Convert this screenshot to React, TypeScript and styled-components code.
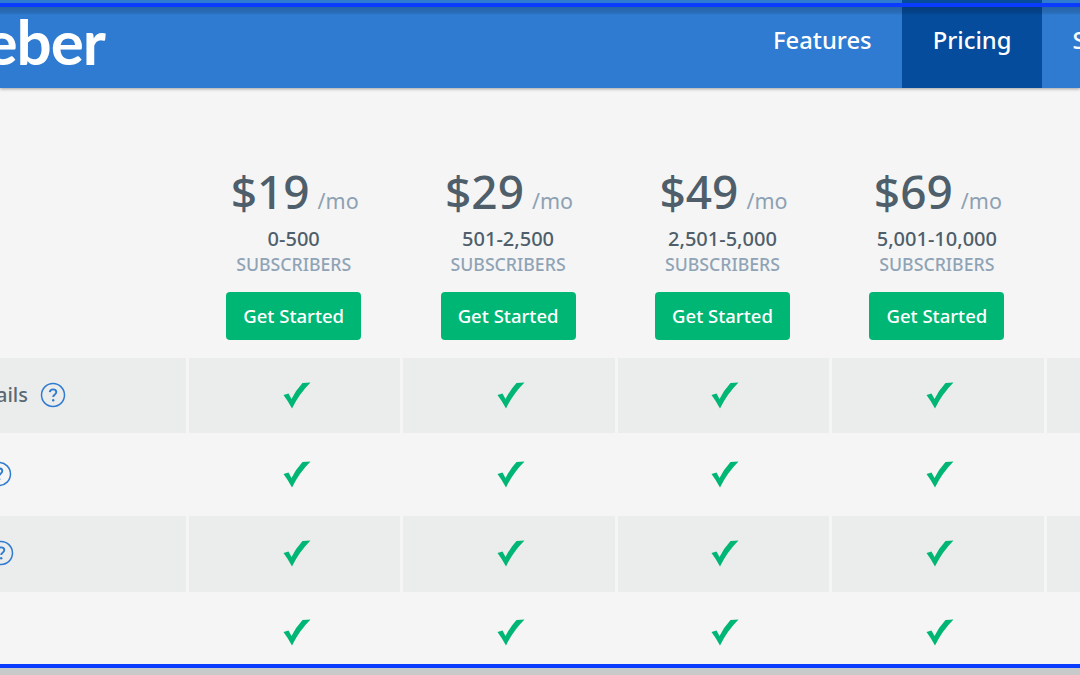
import React from "react";
import styled, { createGlobalStyle } from "styled-components";

const Global = createGlobalStyle`
  html, body { margin: 0; padding: 0; background: #f5f5f5; }
  body { font-family: "Noto Sans", "Open Sans", sans-serif; }
`;

const Page = styled.div`
  position: relative;
  width: 1080px;
  height: 675px;
  overflow: hidden;
  display: flex;
  flex-direction: column;
  background: #f5f5f5;
`;

const TopRule = styled.div`
  position: absolute;
  top: 3px;
  left: 0;
  right: 0;
  height: 4px;
  background: #0a3cff;
  &::after {
    content: "";
    position: absolute;
    top: 4px;
    left: 0;
    right: 0;
    height: 8px;
    background: linear-gradient(rgba(0, 0, 0, 0.2), rgba(0, 0, 0, 0.12) 70%, rgba(0, 0, 0, 0));
  }
`;

const Header = styled.header`
  flex: 0 0 88px;
  display: flex;
  background: #2f7bd1;
  box-shadow: 0 1px 3px rgba(0, 0, 0, 0.35);
  position: relative;
`;

const LogoArea = styled.div`
  flex: 0 0 743px;
  overflow: hidden;
  display: flex;
  justify-content: flex-end;
  width: 743px;
`;

const Logo = styled.div`
  margin-right: 638px;
  margin-top: 2px;
  font-family: "Lato", sans-serif;
  font-weight: 700;
  font-size: 62px;
  line-height: 78px;
  letter-spacing: -1px;
  color: #fff;
  white-space: nowrap;
`;

const Nav = styled.nav`
  display: flex;
  flex-shrink: 0;
`;

const NavItem = styled.a<{ $active?: boolean }>`
  flex-shrink: 0;
  padding: 0 ${(p) => (p.$active ? "31px" : "30px")} 9px;
  display: flex;
  align-items: center;
  height: 88px;
  box-sizing: border-box;
  font-family: "Noto Sans", sans-serif;
  font-size: 23.8px;
  font-weight: 500;
  color: #fff;
  background: ${(p) => (p.$active ? "#054c9c" : "transparent")};
`;

const Content = styled.main`
  flex: 1;
  min-height: 0;
  overflow: hidden;
`;

const Table = styled.div`
  display: grid;
  grid-template-columns: 186px repeat(5, 211.4px);
  grid-template-rows: 266px repeat(4, 75.2px);
  column-gap: 3px;
  row-gap: 4px;
  width: 1300px;
`;

const PlanHead = styled.div`
  box-sizing: border-box;
  padding-top: 73px;
  padding-right: 2px;
  display: flex;
  flex-direction: column;
  align-items: center;
`;

const Spacer = styled.div``;

const Price = styled.div`
  display: flex;
  align-items: baseline;
  gap: 8px;
  height: 60px;
  margin-left: 2px;
  color: #4e5e6a;
  font-size: 46px;
  font-weight: 500;
  line-height: 60px;
`;

const Per = styled.span`
  font-size: 21.5px;
  font-weight: 400;
  color: #8da1b3;
`;

const Range = styled.div`
  margin-top: 5px;
  font-size: 20px;
  font-weight: 500;
  line-height: 26px;
  color: #4e5e6a;
`;

const Unit = styled.div`
  font-size: 17.7px;
  font-weight: 500;
  line-height: 26px;
  margin-top: -1px;
  color: #8fa3b5;
  text-transform: uppercase;
`;

const CTA = styled.button`
  margin-top: 15px;
  width: 135px;
  height: 48px;
  border: 0;
  padding: 0 0 2px;
  border-radius: 4px;
  background: #00b674;
  color: #fff;
  font-family: inherit;
  font-size: 18.5px;
  font-weight: 500;
`;

const LabelCell = styled.div<{ $shade: boolean; $inset: number }>`
  background: ${(p) => (p.$shade ? "#ebeded" : "transparent")};
  display: flex;
  align-items: center;
  justify-content: flex-end;
  gap: 12px;
  padding-right: ${(p) => p.$inset}px;
  padding-bottom: 2px;
  box-sizing: border-box;
  overflow: hidden;
  white-space: nowrap;
  font-size: 20px;
  font-weight: 500;
  color: #5a6872;
`;

const Cell = styled.div<{ $shade: boolean }>`
  background: ${(p) => (p.$shade ? "#ebeded" : "transparent")};
  display: flex;
  align-items: center;
  justify-content: center;
  padding-left: 4px;
  padding-bottom: 2px;
`;

const BottomBar = styled.div`
  flex: 0 0 7px;
  border-top: 4px solid #0a3cff;
  background: #c8cac9;
`;

const HelpIcon = () => (
  <svg width="26" height="26" viewBox="0 0 26 26" style={{ flexShrink: 0 }}>
    <circle cx="13" cy="13" r="11.5" fill="none" stroke="#2f7bd1" strokeWidth="1.5" />
    <path
      d="M9.8 10.2c.2-1.8 1.5-2.8 3.3-2.8 1.9 0 3.2 1.1 3.2 2.7 0 1.3-.7 2-1.7 2.7-.9.6-1.4 1.1-1.4 2.2"
      fill="none"
      stroke="#2f7bd1"
      strokeWidth="1.9"
    />
    <circle cx="13.2" cy="18.2" r="1.2" fill="#2f7bd1" />
  </svg>
);

const Check = () => (
  <svg width="28" height="28" viewBox="0 0 28 28">
    <path d="M0.5 14 L5.5 12.5 L8.5 18 Q13 9 19.5 2 L27.5 1.5 Q16 13 9 27.5 Q5 20 0.5 14 Z" fill="#00b674" />
  </svg>
);

const plans = [
  { price: "$19", range: "0-500" },
  { price: "$29", range: "501-2,500" },
  { price: "$49", range: "2,501-5,000" },
  { price: "$69", range: "5,001-10,000" },
];

const rows = [
  { label: "Emails", inset: 120 },
  { label: "", inset: 174 },
  { label: "", inset: 172 },
  { label: "", inset: 0 },
];

export default function App() {
  return (
    <Page>
      <Global />
      <Header>
        <LogoArea>
          <Logo>AWeber</Logo>
        </LogoArea>
        <Nav>
          <NavItem>Features</NavItem>
          <NavItem $active>Pricing</NavItem>
          <NavItem>Support</NavItem>
        </Nav>
      </Header>
      <Content>
        <Table>
          <Spacer />
          {plans.map((p) => (
            <PlanHead key={p.price}>
              <Price>
                {p.price}
                <Per>/mo</Per>
              </Price>
              <Range>{p.range}</Range>
              <Unit>Subscribers</Unit>
              <CTA>Get Started</CTA>
            </PlanHead>
          ))}
          <Spacer />
          {rows.map((r, i) => (
            <React.Fragment key={i}>
              <LabelCell $shade={i % 2 === 0} $inset={r.inset}>
                {r.label}
                {i < 3 && <HelpIcon />}
              </LabelCell>
              {plans.map((p) => (
                <Cell key={p.price} $shade={i % 2 === 0}>
                  <Check />
                </Cell>
              ))}
              <Cell $shade={i % 2 === 0} />
            </React.Fragment>
          ))}
        </Table>
      </Content>
      <BottomBar />
      <TopRule />
    </Page>
  );
}
